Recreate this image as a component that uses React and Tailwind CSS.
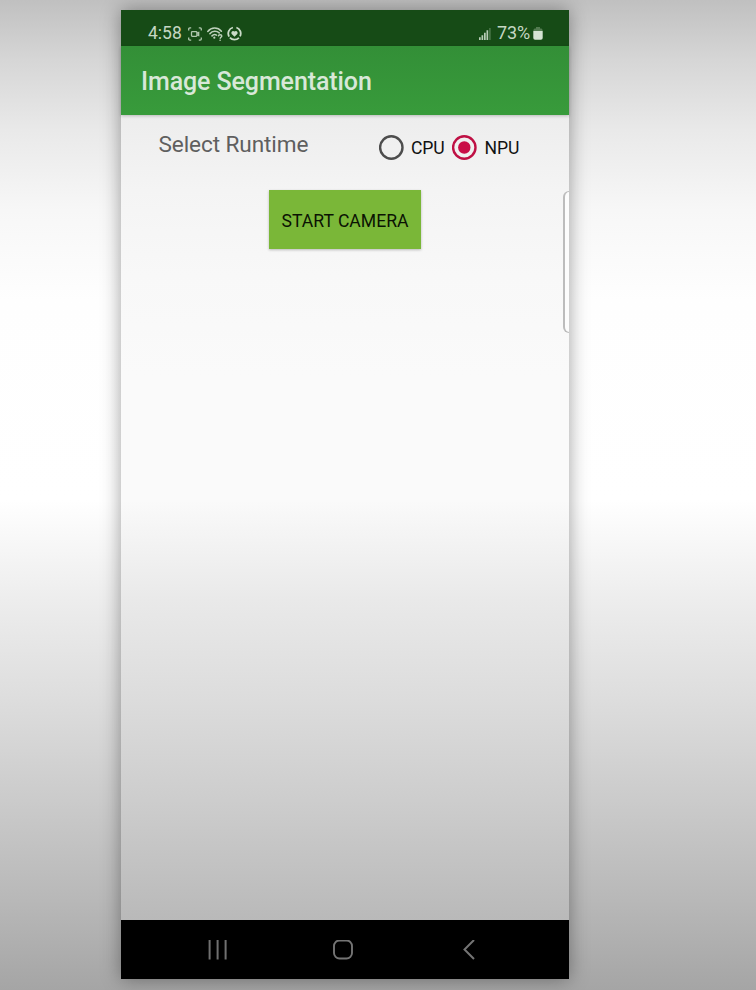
import React from "react";

function CaptureIcon() {
  return (
    <svg className="ml-[6px] h-[14px] w-[14px]" viewBox="0 0 14 14" fill="none" stroke="#b0c7ae" strokeWidth="1.3">
      <path d="M.7 3.4V2Q.7.9 1.8.9H3.2M10.8.9h1.4q1.1 0 1.1 1.1v1.4M13.3 10.6V12q0 1.1-1.1 1.1h-1.4M3.2 13.1H1.8Q.7 13.1.7 12v-1.4" />
      <rect x="3.5" y="4.7" width="5.4" height="4.6" rx=".8" />
      <path d="M8.9 6.2l1.8-.8v3.2l-1.8-.8" />
    </svg>
  );
}

function WifiIcon() {
  return (
    <svg className="ml-[5px] h-[14px] w-[16px] overflow-visible" viewBox="0 0 16 14" fill="none" stroke="#bed1bc" strokeWidth="1.6" strokeLinecap="round">
      <path d="M.8 4.4C4.5 0 10.7 0 14.4 4.2M2.9 6.7c2.5-3 6.8-3.1 9.3-.8M5 8.9c1.4-1.5 3.2-1.6 4.5-.8" />
      <circle cx="7.3" cy="10.7" r="1.1" fill="#bed1bc" stroke="none" />
      <path d="M11.4 8.9c.2-1.6 3.4-1.6 3.4.1 0 1.2-1.6 1.2-1.6 2.3" strokeWidth="1.4" />
      <circle cx="13.1" cy="13.3" r=".8" fill="#bed1bc" stroke="none" />
    </svg>
  );
}

function HeartRingIcon() {
  return (
    <svg className="ml-[4px] h-[15px] w-[15px]" viewBox="0 0 15 15" fill="none" stroke="#cbdbc9" strokeWidth="1.8">
      <path d="M9.4 1.5a6.2 6.2 0 0 1 3.6 8.8M11.9 11.8a6.2 6.2 0 0 1-9-.1M2.1 10.6A6.2 6.2 0 0 1 5.9 1.5" />
      <path d="M7.5 10.8L4.7 7.9C3.4 6.3 5.8 3.8 7.5 5.6 9.2 3.8 11.6 6.3 10.3 7.9z" fill="#cbdbc9" stroke="none" />
    </svg>
  );
}

function StatusBar() {
  return (
    <div className="flex h-[35.5px] items-center bg-[#164b16] pt-[11.5px] pr-[26px] pl-[27px] text-[17.5px] leading-none text-[#c5d7c3]">
      <span className="w-[34px] whitespace-nowrap">4:58</span>
      <CaptureIcon />
      <WifiIcon />
      <HeartRingIcon />
      <svg className="ml-auto h-3 w-3" viewBox="0 0 12 12" fill="#b7cdb5">
        <path d="M0 9.3h1.7V12H0zM2.5 7.3h1.7V12H2.5zM5 4.8h1.7V12H5zM7.5 2.3h1.7V12H7.5z" />
        <path d="M10.1 0h1.6v12h-1.6z" fill="#4b774a" />
      </svg>
      <span className="ml-[6px] w-[34px] pb-px text-[18px] tracking-[-0.1px] whitespace-nowrap">73%</span>
      <svg className="ml-[2px] h-[13px] w-[10px]" viewBox="0 0 10 13">
        <path d="M3 0h4v1.5h1.5Q9.7 2 9.7 4H.3Q.3 2 1.5 1.5H3z" fill="#527b50" />
        <path d="M.3 4h9.4v7q0 1.8-1.8 1.8H2.1Q.3 12.8.3 11z" fill="#d5e3d3" />
      </svg>
    </div>
  );
}

function Radio({ label, checked, className }) {
  return (
    <label className={"flex items-center text-[17.6px] leading-none text-[#111] " + className}>
      <svg className="size-[25px] shrink-0" viewBox="0 0 25 25" fill="none">
        <circle cx="12.3" cy="12.5" r="11.2" stroke={checked ? "#bf1044" : "#4d4d4d"} strokeWidth="2.4" />
        {checked && <circle cx="12.3" cy="12.5" r="6.2" fill="#c90e47" />}
      </svg>
      <span className="ml-[7.5px] pt-[3px] tracking-[-0.1px] whitespace-nowrap">{label}</span>
    </label>
  );
}

function NavigationBar() {
  return (
    <div className="flex h-[59px] items-center bg-black pl-[87px]">
      <svg className="h-5 w-[19px]" viewBox="0 0 19 20" stroke="#707070" strokeWidth="2">
        <path d="M1.6 0v19.5M9.6 0v19.5M17.6 0v19.5" />
      </svg>
      <svg className="ml-[106px] size-5" viewBox="0 0 20 20" fill="none" stroke="#747474" strokeWidth="1.9">
        <rect x="1" y=".5" width="18" height="18" rx="5.5" />
      </svg>
      <svg className="ml-[110px] h-5 w-3" viewBox="0 0 12 20" fill="none" stroke="#747474" strokeWidth="2">
        <path d="M11 0L1.5 9.5l9.5 9.5" />
      </svg>
    </div>
  );
}

export default function App() {
  return (
    <div className="h-[990px] w-[756px] overflow-hidden bg-[linear-gradient(180deg,#c0c0c0_0px,#d6d6d6_60px,#e9e9e9_130px,#f7f7f7_210px,#fefefe_300px,#ffffff_500px,#ededed_600px,#dddddd_700px,#cbcbcb_800px,#b8b8b8_900px,#a5a5a5_990px)] pt-[10px] pl-[121px] font-[Roboto,sans-serif]">
      <main className="flex h-[969px] w-[448px] flex-col shadow-[0_0_18px_rgba(0,0,0,0.38)]">
        <StatusBar />
        <header className="z-10 flex h-[69.5px] items-center bg-linear-to-b from-[#338f37] to-[#389b3b] pt-[2px] pl-5 text-[25px] font-medium tracking-[-0.1px] text-[#d8e8d8] shadow-[0_1px_3px_rgba(0,0,0,0.22)]">
          <h1 className="whitespace-nowrap">Image Segmentation</h1>
        </header>
        <section className="relative flex flex-1 flex-col bg-[linear-gradient(180deg,#ededed_0px,#f4f4f4_75px,#f8f8f8_160px,#fafafa_260px,#fafafa_385px,#e9e9e9_485px,#dcdcdc_585px,#cdcdcd_685px,#b9b9b9_805px)]">
          <div className="flex h-[75px] pl-[37.5px]">
            <span className="w-[220px] pt-[12.5px] text-[22.6px] tracking-[-0.1px] whitespace-nowrap text-[#5f5f5f]">Select Runtime</span>
            <div className="flex h-[25px] pt-[20px]">
              <Radio label="CPU" className="h-[25px] w-[73.5px]" />
              <Radio label="NPU" checked className="h-[25px]" />
            </div>
          </div>
          <button className="flex h-[59px] w-[152.5px] items-center justify-center self-center bg-[#7ab738] pt-[3px] text-[17.6px] whitespace-nowrap text-[#0b1303] shadow-[0_0.5px_2.5px_rgba(0,0,0,0.25)]">
            START CAMERA
          </button>
          <span className="absolute top-[76px] right-0 h-[142px] w-[6px] rounded-l-[6px] border-y border-l-2 border-[#bcbcbc] bg-[#fcfcfc]" />
        </section>
        <NavigationBar />
      </main>
    </div>
  );
}
